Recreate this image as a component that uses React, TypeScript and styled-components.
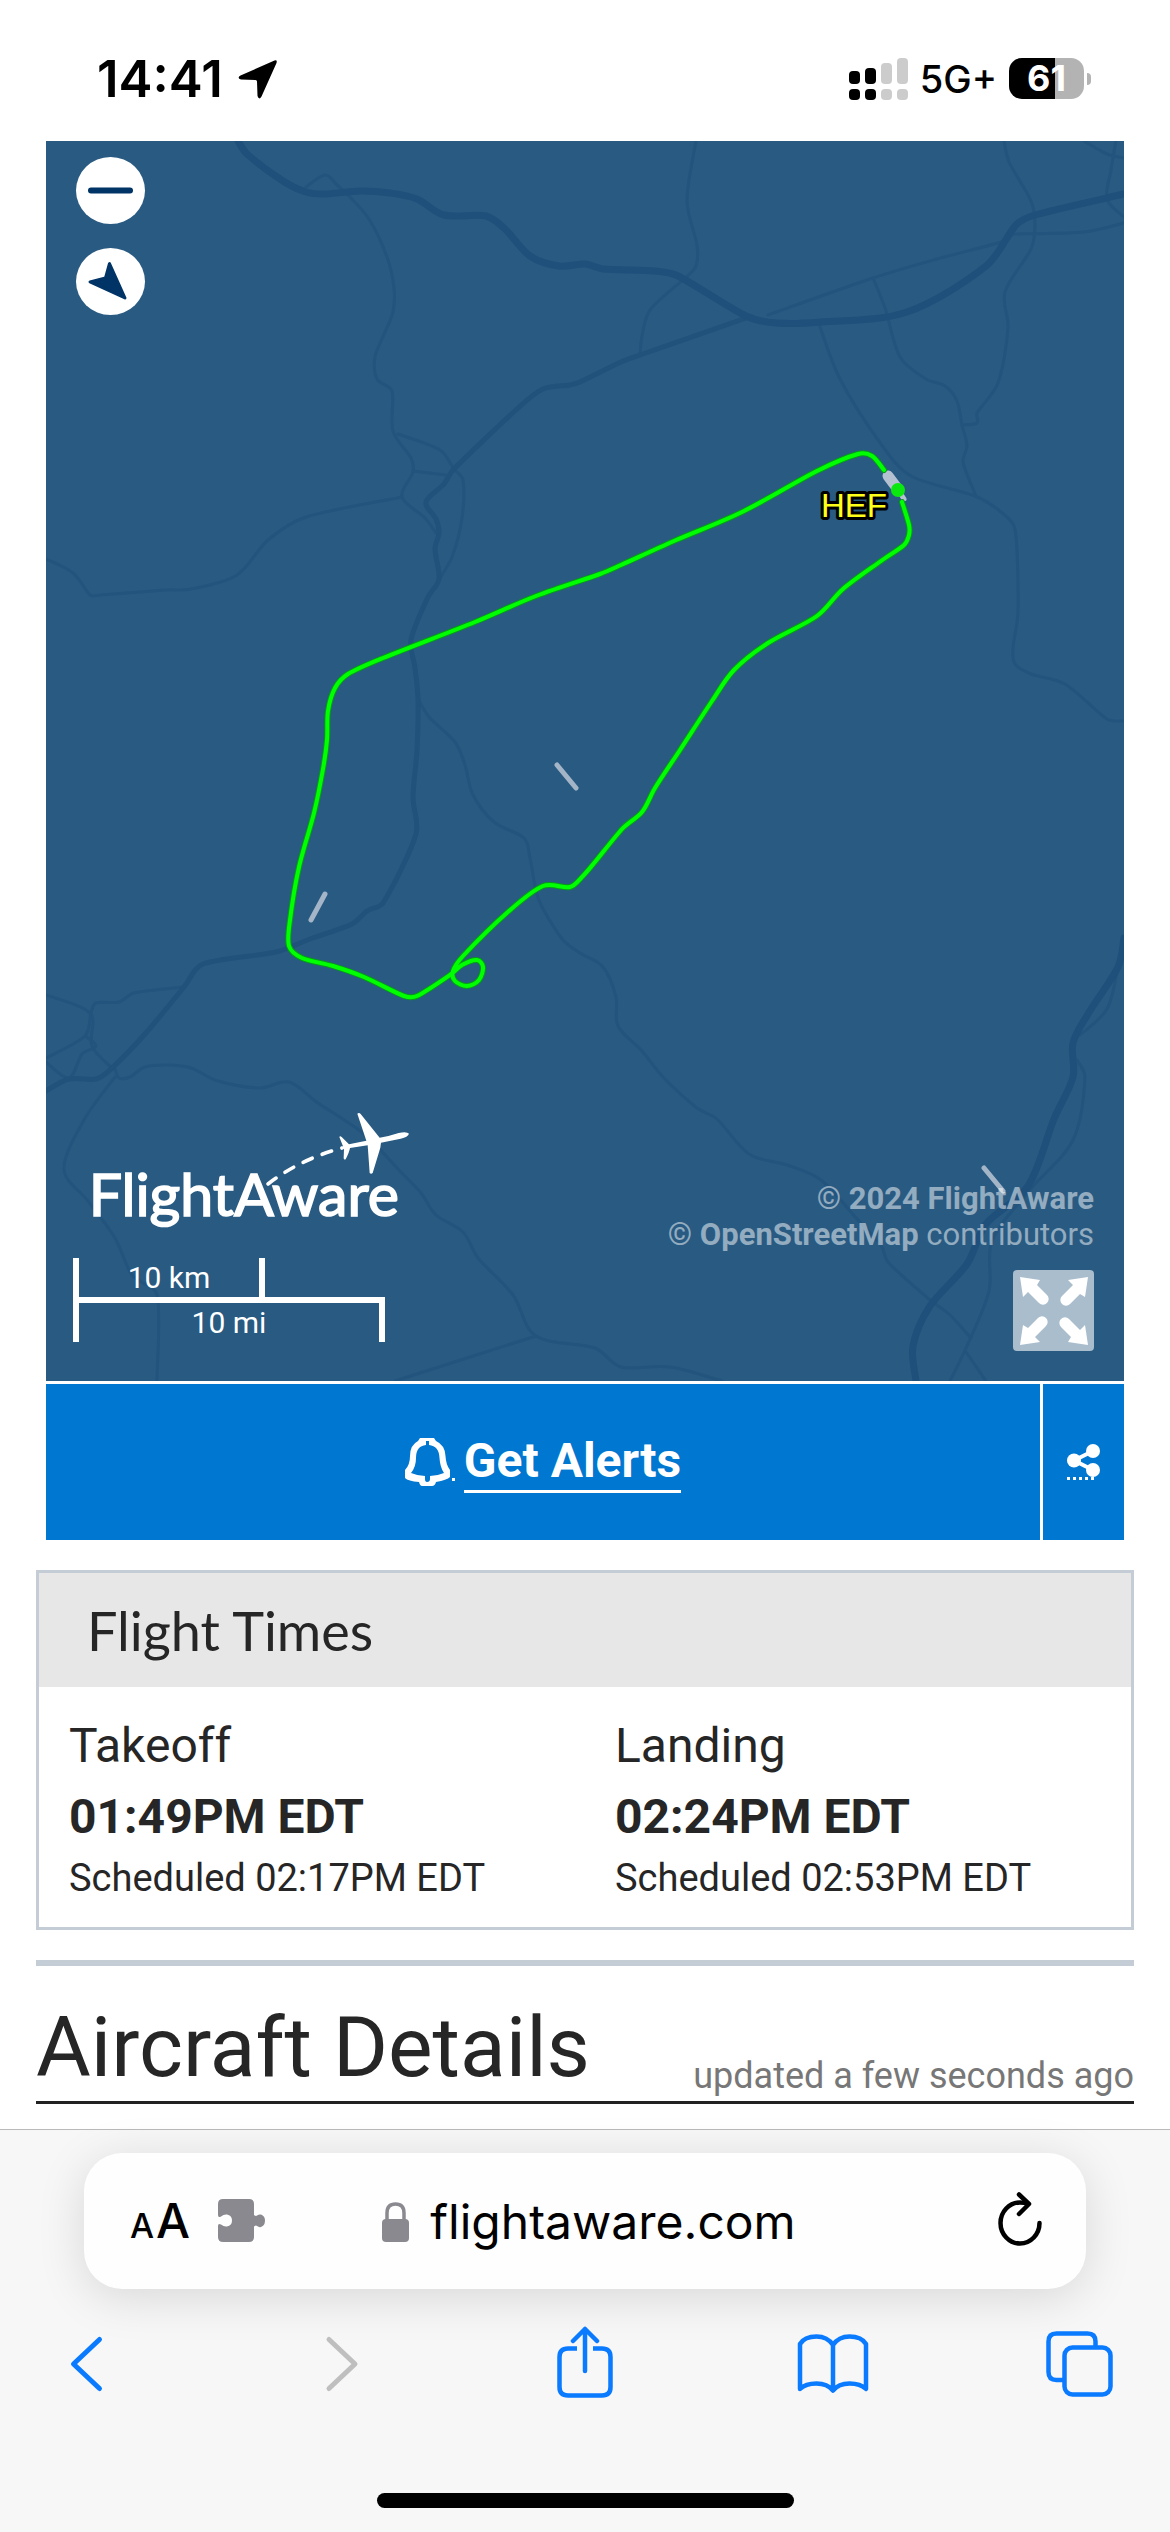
import React from "react";
import styled, { createGlobalStyle } from "styled-components";

const GlobalStyle = createGlobalStyle`
  *, *::before, *::after { box-sizing: border-box; }
  body { margin: 0; background: #fff; color: #262626; font-family: Roboto, sans-serif; }
  h1, h2, h3, p, dl, dt, dd { margin: 0; font-weight: 400; }
  button { margin: 0; padding: 0; border: 0; background: none; color: inherit; font: inherit; cursor: pointer; }
  a { color: inherit; text-decoration: none; }
  svg { display: block; flex: none; }
`;

const Page = styled.div`
  display: flex;
  flex-direction: column;
  min-height: 100vh;
  overflow-x: hidden;
`;

/* ---------- status bar ---------- */

const StatusBar = styled.header`
  display: flex;
  justify-content: space-between;
  align-items: center;
  height: 141px;
  padding: 16px 79px 0 97px;
  color: #000;
  font-family: Inter, sans-serif;
`;

const StatusGroup = styled.div<{ $gap: number }>`
  display: flex;
  align-items: center;
  gap: ${(p) => p.$gap}px;
`;

const Clock = styled.time`
  font-size: 51px;
  line-height: 60px;
  font-weight: 600;
`;

const Network = styled.span`
  font-size: 38px;
  line-height: 48px;
  font-weight: 500;
`;

const Battery = styled.div`
  display: flex;
  align-items: center;
  gap: 3px;
`;

const BatteryBody = styled.div`
  width: 75px;
  height: 41px;
  border-radius: 13px;
  background: linear-gradient(90deg, #000 61%, #b3b3b3 61%);
  color: #fff;
  font-size: 36px;
  line-height: 41px;
  font-weight: 700;
  text-align: center;
`;

const BatteryTip = styled.div`
  width: 4px;
  height: 12px;
  border-radius: 0 4px 4px 0;
  background: #b3b3b3;
`;

/* ---------- map ---------- */

const Main = styled.main`
  display: flex;
  flex-direction: column;
  gap: 30px;
  padding: 0 36px 25px;
`;

const FlightCard = styled.section`
  display: flex;
  flex-direction: column;
  gap: 3px;
  padding: 0 10px;
`;

const MapFrame = styled.div`
  position: relative;
  display: flex;
  flex-direction: column;
  justify-content: space-between;
  aspect-ratio: 1078 / 1240;
  padding: 16px 30px 30px 27px;
  background: #285a82;
  color: #fff;
`;

const MapCanvas = styled.svg`
  position: absolute;
  inset: 0;
  width: 100%;
  height: 100%;
`;

const MapControls = styled.div`
  position: relative;
  display: flex;
  flex-direction: column;
  gap: 24px;
  padding-left: 3px;
`;

const RoundButton = styled.button`
  width: 69px;
  height: 67px;
  border-radius: 50%;
  background: #fff;
`;

const MapFooter = styled.div`
  position: relative;
  display: flex;
  justify-content: space-between;
  align-items: flex-end;
`;

const Branding = styled.div`
  display: flex;
  flex-direction: column;
  gap: 26px;
  padding-bottom: 9px;
`;

const Logo = styled.svg`
  margin-left: 17px;
`;

const Scale = styled.div`
  font-size: 30px;
  line-height: 39px;
  text-align: center;
`;

const ScaleKm = styled.div`
  width: 192px;
  border: solid #fff;
  border-width: 0 6px;
`;

const ScaleMi = styled.div`
  width: 312px;
  border: solid #fff;
  border-width: 6px 6px 0;
`;

const Credits = styled.div`
  display: flex;
  flex-direction: column;
  align-items: flex-end;
  gap: 17px;
`;

const CreditText = styled.p`
  color: rgba(255, 255, 255, 0.5);
  font-size: 31px;
  line-height: 36px;
  text-align: right;
`;

const ExpandButton = styled.button`
  width: 81px;
  height: 81px;
  border-radius: 4px;
  background: rgba(255, 255, 255, 0.6);
`;

const ActionRow = styled.div`
  display: grid;
  grid-template-columns: 1fr 81px;
  gap: 3px;
  height: 156px;
  color: #fff;
`;

const AlertLink = styled.a`
  display: flex;
  justify-content: center;
  align-items: center;
  gap: 9px;
  background: #0077d0;
  font-size: 48px;
  line-height: 58px;
  font-weight: 700;
`;

const AlertLabel = styled.span`
  border-bottom: 3px solid #fff;
`;

const ShareButton = styled.button`
  display: flex;
  justify-content: center;
  align-items: center;
  background: #0077d0;
`;

/* ---------- times ---------- */

const Panel = styled.section`
  border: 3px solid #c4ccd5;
`;

const PanelTitle = styled.h2`
  padding: 22px 48px 20px;
  background: #e7e7e7;
  font-family: Lato, sans-serif;
  font-size: 54px;
  line-height: 72px;
`;

const TimesGrid = styled.dl`
  display: grid;
  grid-template-columns: 1fr 1fr;
  padding: 27px 0;
`;

const TimeCell = styled.div`
  padding-left: 30px;
`;

const TimeLabel = styled.dt`
  font-size: 48px;
  line-height: 64px;
`;

const TimeValue = styled.dd`
  font-size: 48px;
  line-height: 78px;
  font-weight: 700;
`;

const TimeNote = styled.dd`
  font-size: 38px;
  line-height: 44px;
`;

const DetailsHeader = styled.section`
  display: flex;
  justify-content: space-between;
  padding-top: 30px;
  height: 144px;
  border-top: 6px solid #c4ccd5;
  border-bottom: 3px solid #222;
`;

const DetailsTitle = styled.h2`
  font-size: 84px;
  line-height: 104px;
`;

const Updated = styled.span`
  align-self: flex-end;
  color: #777;
  font-size: 36px;
  line-height: 50px;
`;

/* ---------- browser chrome ---------- */

const BrowserBar = styled.footer`
  flex: 1;
  display: flex;
  flex-direction: column;
  align-items: center;
  padding-bottom: 24px;
  border-top: 1px solid #b9b9bb;
  background: #f7f7f7;
`;

const AddressRow = styled.div`
  align-self: stretch;
  padding: 23px 84px 37px;
`;

const AddressBar = styled.div`
  display: grid;
  grid-template-columns: 1fr auto 1fr;
  align-items: center;
  height: 136px;
  padding: 0 44px 0 46px;
  border-radius: 38px;
  background: #fefefe;
  box-shadow: 0 8px 48px rgba(0, 0, 0, 0.13);
  color: #000;
  font-family: Inter, sans-serif;
`;

const AddressTools = styled.div`
  display: flex;
  align-items: center;
  gap: 28px;
`;

const TextSizeButton = styled.button`
  display: flex;
  align-items: baseline;
  gap: 2px;
  padding-top: 4px;
  font-weight: 500;
  line-height: 60px;
`;

const Letter = styled.span<{ $size: number }>`
  font-size: ${(p) => p.$size}px;
`;

const UrlButton = styled.button`
  display: flex;
  align-items: center;
  gap: 20px;
  padding: 2px 0 0 6px;
  font-size: 48px;
  line-height: 60px;
`;

const ReloadButton = styled.button`
  justify-self: end;
`;

const Toolbar = styled.nav`
  align-self: stretch;
  display: flex;
  justify-content: space-between;
  padding: 0 50px 0 46px;
`;

const ToolButton = styled.button<{ $color: string }>`
  width: 80px;
  height: 72px;
  color: ${(p) => p.$color};
`;

const HomeIndicator = styled.div`
  width: 417px;
  height: 15px;
  margin-top: auto;
  border-radius: 8px;
  background: #000;
`;

/* ---------- map data ---------- */

/** Turns "x,y x,y ..." into a smooth path through every point. */
function smooth(points: string): string {
  const p = points.split(" ").map((s) => s.split(",").map(Number));
  let d = `M${p[0][0]} ${p[0][1]}`;
  for (let i = 0; i < p.length - 1; i++) {
    const a = p[i - 1] || p[i];
    const b = p[i];
    const c = p[i + 1];
    const e = p[i + 2] || c;
    const len = Math.hypot(c[0] - b[0], c[1] - b[1]);
    const k1 = Math.min(1 / 6, len / 3 / (Math.hypot(c[0] - a[0], c[1] - a[1]) || 1));
    const k2 = Math.min(1 / 6, len / 3 / (Math.hypot(e[0] - b[0], e[1] - b[1]) || 1));
    d += `C${b[0] + (c[0] - a[0]) * k1} ${b[1] + (c[1] - a[1]) * k1} ${c[0] - (e[0] - b[0]) * k2} ${
      c[1] - (e[1] - b[1]) * k2
    } ${c[0]} ${c[1]}`;
  }
  return d;
}

const HIGHWAYS = [
  "238,141 247,154 283,181 306,192 325,194 360,191 390,193 417,199 444,215 486,216 505,229 530,256 559,266 585,264 603,269 655,271 678,276 746,316 776,323 821,322 907,312 986,266 1016,225 1035,215 1124,194",
  "1124,938 1118,967 1088,1014 1073,1043 1073,1077 1054,1119 1028,1186 986,1224 967,1264 930,1306 913,1346 916,1381",
];

const ROADS = [
  "746,318 640,355 621,362 580,382 570,385 543,389 517,409 453,470 444,484 426,502 436,519 439,533 435,549 439,579 428,597 411,640 415,668 418,699 417,750 413,797 416,834 383,903 367,911 352,924 310,939 276,952 203,964 184,987 145,1034 111,1069 96,1079 69,1079 46,1091",
];

const STREETS = [
  "306,187 325,175 337,185 348,195 369,219 387,257 394,288 393,312 385,332 375,357 377,379 392,391 393,431 411,458 413,472 402,497 425,518 436,533",
  "398,434 440,450 454,469 463,480 462,518 452,557 438,581",
  "413,471 446,475",
  "1013,234 1001,242 937,259 873,278 768,315",
  "46,559 73,573 90,595 100,595 165,590 191,589 237,575 268,540 306,517 402,497",
  "418,699 429,717 455,742 465,765 473,795 494,822 524,838 530,858 536,891 542,907 563,940 580,953 603,967 616,997 618,1026 642,1051 663,1077 697,1108 717,1119 749,1154 787,1165 821,1180 858,1220 881,1245 888,1262 930,1300 949,1314 971,1338",
  "966,1352 986,1381",
  "115,1069 119,1078 130,1077 145,1067 168,1065 191,1068 218,1081 260,1088 289,1082 318,1103 364,1134 398,1169 421,1193 436,1215 463,1232 478,1258 513,1295 536,1336 595,1348 621,1367 670,1367 722,1381",
  "536,1336 395,1381",
  "115,1077 84,1120 64,1169 88,1201 115,1238 132,1275 157,1295 157,1381",
  "46,995 90,1013 92,1046 113,1069",
  "184,987 134,993 119,1002 96,1003 91,1013 85,1036 46,1058",
  "46,1062 69,1078 82,1054 96,1046 85,1036",
  "696,141 687,201 697,245 696,266 685,278 650,310 642,336 640,355",
  "1004,141 1009,162 1031,201 1035,225 1031,249 1005,292 1008,328 998,383 977,413 977,423 962,425",
  "873,278 885,308 900,357 926,379 945,386 957,401 962,425 967,446 963,462 976,496",
  "819,324 840,379 881,444 911,476 975,496 1001,512 1015,529 1018,612 1013,648 1015,664 1031,674 1065,684 1107,719 1124,721",
  "1013,234 1084,232 1124,223",
  "1084,141 1107,154 1124,158",
  "1116,141 1111,170 1107,199 1124,217",
  "1118,967 1107,1009 1080,1035",
  "1077,1060 1085,1077 1073,1140 1028,1192 992,1241 989,1291 967,1346 950,1381",
];

const TRACK =
  "902,502 909,525 909,535 904,545 881,561 843,589 817,616 768,643 734,670 712,701 680,750 655,788 642,812 623,828 595,862 582,877 570,887 543,886 509,911 463,956 453,971 455,981 467,986 479,980 483,967 477,960 462,965 450,975 417,996 404,996 364,977 333,966 302,958 289,946 290,920 299,867 314,813 323,769 327,740 328,711 335,688 348,674 383,658 475,622 536,596 600,574 621,565 674,541 742,512 817,471 858,454 872,456 884,470";

function FlightMap() {
  const track = smooth(TRACK);
  return (
    <MapCanvas viewBox="46 141 1078 1240" preserveAspectRatio="xMidYMid slice" role="img" aria-label="Flight track map" fill="none" strokeLinecap="round" strokeLinejoin="round">
      <g stroke="#22547e" strokeWidth="3">
        {STREETS.map((s) => <path key={s} d={smooth(s)} />)}
      </g>
      <g stroke="#20527c" strokeWidth="5">
        {ROADS.map((s) => <path key={s} d={smooth(s)} />)}
      </g>
      <g stroke="#1e507b" strokeWidth="7">
        {HIGHWAYS.map((s) => <path key={s} d={smooth(s)} />)}
      </g>
      <path d="M557 765L576 788M325 894L311 920M984 1168L1003 1191" stroke="#a3b5c7" strokeWidth="5" />
      <path d="M888 476L897 488" stroke="#b4c1d0" strokeWidth="11" />
      <path d="M897 488L904 499" stroke="#b4c1d0" strokeWidth="5" />
      <path d={track} stroke="#079a1c" strokeWidth="6" />
      <path d={track} stroke="#00ff00" strokeWidth="4" />
      <circle cx="898" cy="490" r="7" fill="#0be80f" />
      <text x="821" y="517" fontFamily="'Liberation Sans', Arial, sans-serif" fontSize="33" fill="#ffff1a" stroke="#000" strokeWidth="6" paintOrder="stroke">
        HEF
      </text>
    </MapCanvas>
  );
}

function FlightAwareLogo() {
  return (
    <Logo width="322" height="122" viewBox="150 90 966 366" fill="#fff">
      <text x="146" y="408" fontFamily="Lato, sans-serif" fontSize="177" stroke="#fff" strokeWidth="5">FlightAware</text>
      <path d="M684 312Q780 238 906 204" fill="none" stroke="#fff" strokeWidth="11" strokeLinecap="round" strokeDasharray="30 32" />
      <path d="M952 101Q957 96 962 102L1019 173Q1050 168 1076 159Q1100 153 1107 161Q1104 171 1082 176L1023 188Q1022 205 1016 220L998 279Q993 283 989 279L983 196L930 204Q928 216 917 238Q911 240 911 234L912 208L905 203L909 199L898 171Q900 166 905 171L927 193L979 182Z" />
    </Logo>
  );
}

function ExpandIcon() {
  const arrow = "M7 7L27 10 24 15 34 25A5 5 0 0 1 26 33L15 22 10 27Z";
  return (
    <svg width="81" height="81" viewBox="0 0 81 81" fill="#fff">
      {[0, 90, 180, 270].map((a) => <path key={a} d={arrow} transform={`rotate(${a} 41 41)`} />)}
    </svg>
  );
}

export default function App() {
  return (
    <Page>
      <GlobalStyle />
      <StatusBar>
        <StatusGroup $gap={15}>
          <Clock>14:41</Clock>
          <svg width="40" height="40" viewBox="0 0 40 40">
            <path d="M36.500 1.500Q39.500 .5 38.500 4L23.500 37.500Q21 41.500 19.500 37L19 22.500Q19 21 17.500 21L3 20.500Q-1.500 19 2.500 16.500Z" />
          </svg>
        </StatusGroup>
        <StatusGroup $gap={12}>
          <svg width="59" height="42" viewBox="0 0 59 42">
            <g fill="#000">
              <rect x="0" y="13" width="11" height="13" rx="4" /><rect x="0" y="31" width="11" height="11" rx="4" />
              <rect x="16" y="10" width="11" height="16" rx="4" /><rect x="16" y="31" width="11" height="11" rx="4" />
            </g>
            <g fill="#ccc">
              <rect x="32" y="5" width="11" height="21" rx="4" /><rect x="32" y="31" width="11" height="11" rx="4" />
              <rect x="48" y="0" width="11" height="26" rx="4" /><rect x="48" y="31" width="11" height="11" rx="4" />
            </g>
          </svg>
          <Network>5G+</Network>
          <Battery>
            <BatteryBody>61</BatteryBody>
            <BatteryTip />
          </Battery>
        </StatusGroup>
      </StatusBar>

      <Main>
        <FlightCard>
          <MapFrame>
            <FlightMap />
            <MapControls>
              <RoundButton aria-label="Zoom out">
                <svg width="69" height="67" viewBox="0 0 69 67">
                  <path d="M15 33.500H54" stroke="#036" strokeWidth="6" strokeLinecap="round" />
                </svg>
              </RoundButton>
              <RoundButton aria-label="Locate flight">
                <svg width="69" height="67" viewBox="0 0 69 67">
                  <path d="M49 50L33.500 15.500 29.500 30 14 34Z" fill="#036" stroke="#036" strokeWidth="3" strokeLinejoin="round" />
                </svg>
              </RoundButton>
            </MapControls>
            <MapFooter>
              <Branding>
                <FlightAwareLogo />
                <Scale>
                  <ScaleKm>10 km</ScaleKm>
                  <ScaleMi>10 mi</ScaleMi>
                </Scale>
              </Branding>
              <Credits>
                <CreditText>
                  © <b>2024 FlightAware</b>
                  <br />© <b>OpenStreetMap</b> contributors
                </CreditText>
                <ExpandButton aria-label="Full screen">
                  <ExpandIcon />
                </ExpandButton>
              </Credits>
            </MapFooter>
          </MapFrame>
          <ActionRow>
            <AlertLink href="#alerts">
              <svg width="50" height="48" viewBox="0 0 50 48" fill="#fff" fillRule="evenodd">
                <path d="M15 0H29L31 3Q40 7 40.500 18Q41 27 45 32V39Q42 42 31 44Q30 48 27 48H17Q15 48 14 44Q3 43 0 40V32Q5 27 5 18Q5 7 13 3ZM21 3V7Q11 8 11 20Q11 29 6 35Q13 38 20 38V41Q20 44 22 44Q25 44 25 41V38Q32 38 39 35Q35 29 34.500 20Q34 8 24 7V3Z" />
                <rect x="47" y="40" width="3" height="3" />
              </svg>
              <AlertLabel>Get Alerts</AlertLabel>
            </AlertLink>
            <ShareButton aria-label="Share">
              <svg width="33" height="36" viewBox="0 0 33 36" fill="#fff" stroke="#fff">
                <path d="M26 7L7 16.500 26 26" fill="none" strokeWidth="4" />
                <g stroke="none">
                  <circle cx="26" cy="7" r="7" /><circle cx="7" cy="16.500" r="7" /><circle cx="26" cy="26" r="7" />
                </g>
                <path d="M0 34.500H27" strokeWidth="3" strokeDasharray="3 3" />
              </svg>
            </ShareButton>
          </ActionRow>
        </FlightCard>

        <Panel>
          <PanelTitle>Flight Times</PanelTitle>
          <TimesGrid>
            <TimeCell>
              <TimeLabel>Takeoff</TimeLabel>
              <TimeValue>01:49PM EDT</TimeValue>
              <TimeNote>Scheduled 02:17PM EDT</TimeNote>
            </TimeCell>
            <TimeCell>
              <TimeLabel>Landing</TimeLabel>
              <TimeValue>02:24PM EDT</TimeValue>
              <TimeNote>Scheduled 02:53PM EDT</TimeNote>
            </TimeCell>
          </TimesGrid>
        </Panel>

        <DetailsHeader>
          <DetailsTitle>Aircraft Details</DetailsTitle>
          <Updated>updated a few seconds ago</Updated>
        </DetailsHeader>
      </Main>

      <BrowserBar>
        <AddressRow>
          <AddressBar>
            <AddressTools>
              <TextSizeButton aria-label="Page settings">
                <Letter $size={34}>A</Letter>
                <Letter $size={48}>A</Letter>
              </TextSizeButton>
              <svg width="47" height="44" viewBox="0 0 47 44" fill="#8a898f">
                <path d="M5 0H31Q36 0 36 5V16Q38 17.500 39 16.500Q41 15 43 15.500Q47 17 47 21.500Q47 26.500 43 28Q41 28.500 39 27Q38 26 36 27.500V38Q36 43 31 43H5Q0 43 0 38V27Q0 24 3 25.500Q6 28 9 27.500Q14 26.500 14 21.500Q14 16.500 9 15.500Q6 15 3 17.500Q0 19 0 16V5Q0 0 5 0Z" />
              </svg>
            </AddressTools>
            <UrlButton>
              <svg width="28" height="40" viewBox="0 0 28 40">
                <rect x="0" y="17" width="27" height="23" rx="4" fill="#8a898f" />
                <path d="M5 18V11Q5 2 13.500 2Q22 2 22 11V18" fill="none" stroke="#8a898f" strokeWidth="3.500" />
              </svg>
              flightaware.com
            </UrlButton>
            <ReloadButton aria-label="Reload">
              <svg width="44" height="64" viewBox="0 0 44 64" fill="none" stroke="#000" strokeWidth="4.500" strokeLinecap="round" strokeLinejoin="round">
                <path d="M41.500 34A19.500 20.500 0 1 1 22 13.500Q26 13.500 30 15" />
                <path d="M21 5.500L31 15 21 25" />
              </svg>
            </ReloadButton>
          </AddressBar>
        </AddressRow>
        <Toolbar>
          <ToolButton $color="#0a7aff" aria-label="Back">
            <svg width="80" height="72" viewBox="0 0 80 72" fill="none" stroke="currentColor" strokeWidth="5" strokeLinecap="round" strokeLinejoin="round">
              <path d="M53.500 13.500L27.500 38 53.500 62.500" />
            </svg>
          </ToolButton>
          <ToolButton $color="#bfbfbf" aria-label="Forward" disabled>
            <svg width="80" height="72" viewBox="0 0 80 72" fill="none" stroke="currentColor" strokeWidth="5" strokeLinecap="round" strokeLinejoin="round">
              <path d="M34 13.500L60 38 34 62.500" />
            </svg>
          </ToolButton>
          <ToolButton $color="#0a7aff" aria-label="Share page">
            <svg width="80" height="72" viewBox="0 0 80 72" fill="none" stroke="currentColor" strokeWidth="4.500" strokeLinejoin="round">
              <path d="M34 22.500H25Q16.500 22.500 16.500 31V61Q16.500 69.500 25 69.500H59Q67.500 69.500 67.500 61V31Q67.500 22.500 59 22.500H50" />
              <path d="M42 3V45M30 15L42 3 54 15" strokeLinecap="round" />
            </svg>
          </ToolButton>
          <ToolButton $color="#0a7aff" aria-label="Bookmarks">
            <svg width="80" height="72" viewBox="0 0 80 72" fill="none" stroke="currentColor" strokeWidth="4.500" strokeLinecap="round" strokeLinejoin="round">
              <path d="M41 19C37 13 31 10.500 24.500 10.500C17.500 10.500 11 13 8 18V63C12 59 18 57.500 24.500 57.500C31 57.500 37 59.500 41 64.500C45 59.500 51 57.500 57.500 57.500C64 57.500 70 59 74 63V18C71 13 64.500 10.500 57.500 10.500C51 10.500 45 13 41 19V64" />
            </svg>
          </ToolButton>
          <ToolButton $color="#0a7aff" aria-label="Tabs">
            <svg width="80" height="72" viewBox="0 0 80 72" fill="none" stroke="currentColor" strokeWidth="4.500">
              <path d="M55.500 20V15.500Q55.500 7.500 47.500 7.500H16.500Q8.500 7.500 8.500 15.500V46Q8.500 54 16.500 54H23" />
              <rect x="24.500" y="21.500" width="46" height="47" rx="8" />
            </svg>
          </ToolButton>
        </Toolbar>
        <HomeIndicator />
      </BrowserBar>
    </Page>
  );
}
